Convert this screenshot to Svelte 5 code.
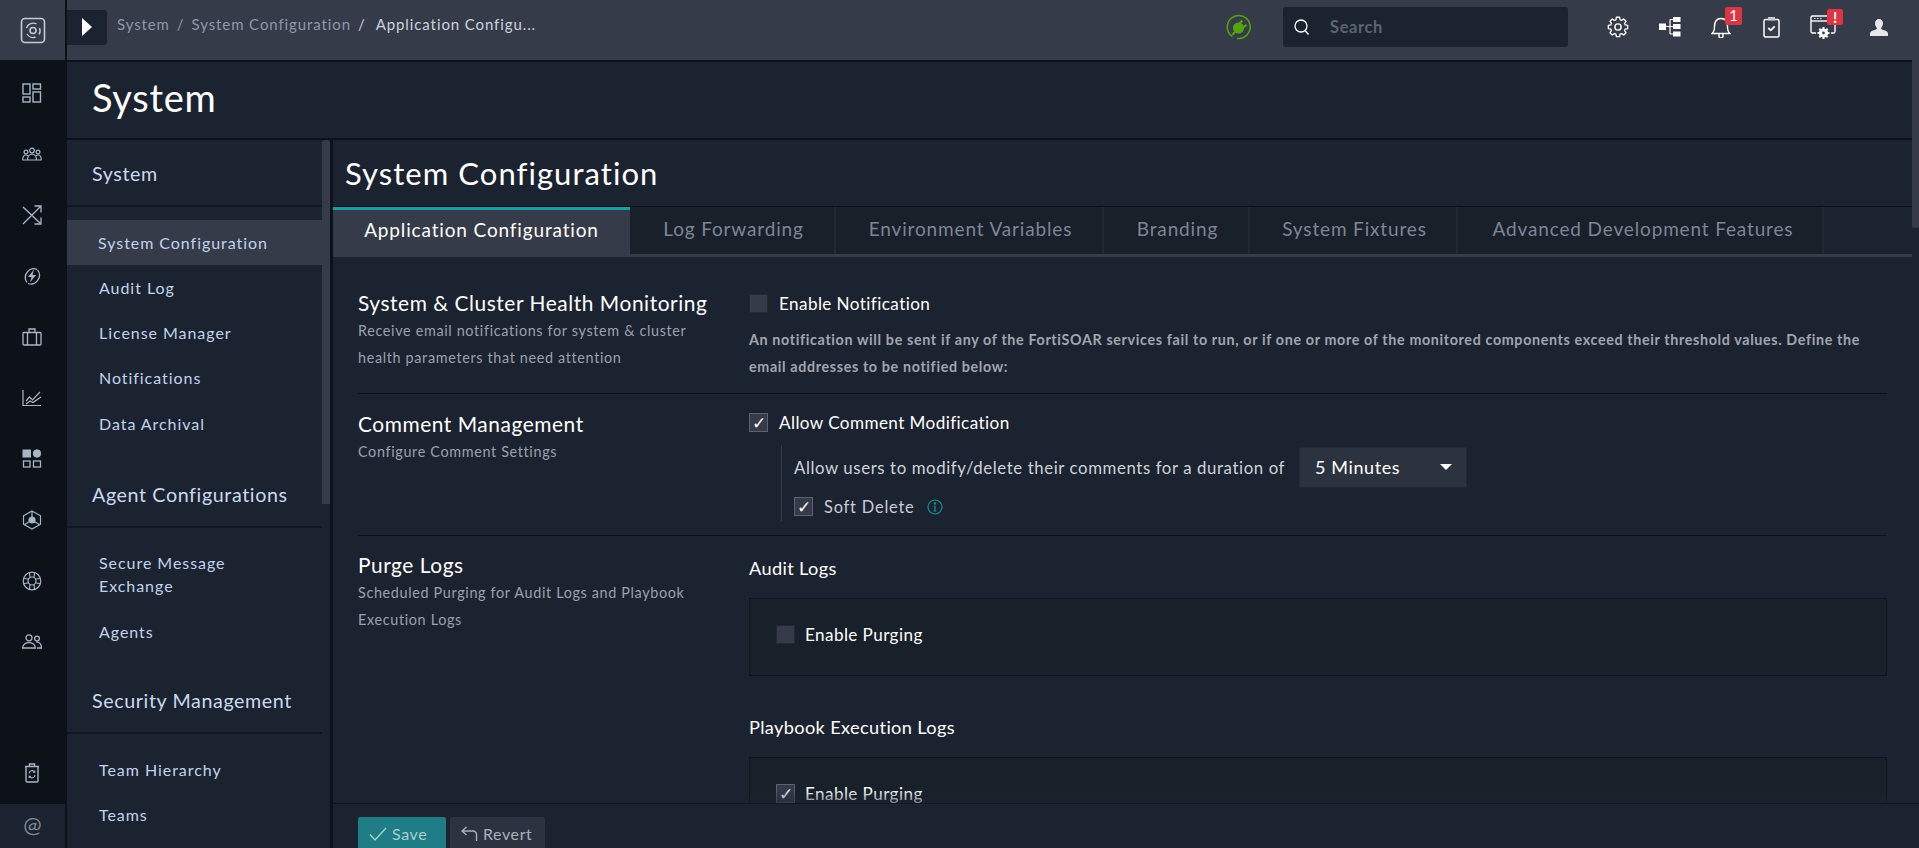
<script lang="ts">
	const groups = [
		{ title: 'System', items: ['System Configuration', 'Audit Log', 'License Manager', 'Notifications', 'Data Archival'] },
		{ title: 'Agent Configurations', items: ['Secure Message Exchange', 'Agents'] },
		{ title: 'Security Management', items: ['Team Hierarchy', 'Teams'] }
	];
	const tabs = [
		{ name: 'Application Configuration', width: 297 },
		{ name: 'Log Forwarding', width: 206 },
		{ name: 'Environment Variables', width: 268 },
		{ name: 'Branding', width: 146 },
		{ name: 'System Fixtures', width: 208 },
		{ name: 'Advanced Development Features', width: 366 }
	];
	let activeItem = $state('System Configuration');
	let activeTab = $state('Application Configuration');
</script>

<div class="app">
	<aside class="rail">
		<div class="railLogo">
			<svg width="26" height="27" viewBox="0 0 26 27" fill="none" stroke="#c5cbd3">
				<rect x="1.5" y="1.5" width="23" height="24" rx="3.5" stroke-width="1.6" />
				<circle cx="13" cy="13.5" r="3" stroke-width="1.6" />
				<path d="M6.5 11a7 7 0 0 1 10-4M19.5 11a7 7 0 0 1-.5 6.5M15.5 20a7 7 0 0 1-8.500-3" stroke-width="1.4" />
			</svg>
		</div>
		<nav class="railNav">
			<span class="railIcon"><svg width="20" height="20" viewBox="0 0 20 20" fill="none" stroke="#a9b5c5" stroke-width="1.4"><rect x="1" y="1" width="7" height="10" /><rect x="1" y="14" width="7" height="5" /><rect x="11" y="1" width="7.500" height="5" /><rect x="11" y="9" width="7.500" height="10" /></svg></span>
			<span class="railIcon"><svg width="20" height="14" viewBox="0 0 20 14" fill="none" stroke="#a9b5c5" stroke-width="1.2"><circle cx="10" cy="3.500" r="2.300" /><circle cx="4" cy="5" r="1.900" /><circle cx="16" cy="5" r="1.900" /><path d="M.700 13c0-3 1.500-5 3.300-5 1 0 1.700.4 2.300 1M19.300 13c0-3-1.500-5-3.300-5-1 0-1.700.4-2.300 1M5.500 13c0-3.500 2-5.800 4.500-5.800s4.500 2.300 4.500 5.800M.5 13h19" /></svg></span>
			<span class="railIcon"><svg width="20" height="20" viewBox="0 0 20 20" fill="none" stroke="#a9b5c5" stroke-width="1.300"><path d="M1 2l17 16M1 19L19 1M12.500 1H19v6.500M19 12.500V19h-6.500" /></svg></span>
			<span class="railIcon"><svg width="20" height="20" viewBox="0 0 20 20" fill="none" stroke="#a9b5c5" stroke-width="1.300"><path d="M5 16.500A8.700 8.700 0 0 1 15 3.300M15.500 3.800A8.700 8.700 0 0 1 6 17.500" /><path d="M12 3.500L6 11h3.500L8 16.500 14 9h-3.500z" fill="#a9b5c5" stroke="none" /></svg></span>
			<span class="railIcon"><svg width="20" height="18" viewBox="0 0 20 18" fill="none" stroke="#a9b5c5" stroke-width="1.300"><rect x="1" y="4.500" width="18" height="12.500" rx="1" /><path d="M7 4.500V1h6v3.500M5.500 4.500V17M14.500 4.500V17" /></svg></span>
			<span class="railIcon"><svg width="20" height="18" viewBox="0 0 20 18" fill="none" stroke="#a9b5c5" stroke-width="1.200"><path d="M1 1v15.500h18M4 12l3.500-4 3 3L18 3M4 15l4-3 3 1.500 8-5.500" /></svg></span>
			<span class="railIcon"><svg width="20" height="19" viewBox="0 0 20 19" fill="#a9b5c5" stroke="#a9b5c5"><rect x="1" y="1" width="7.500" height="7" /><circle cx="15" cy="4.500" r="3.700" /><rect x="1.500" y="12" width="6.500" height="6" fill="none" stroke-width="1.300" /><rect x="11.500" y="12" width="7" height="6" fill="none" stroke-width="1.300" /></svg></span>
			<span class="railIcon"><svg width="20" height="20" viewBox="0 0 20 20" fill="none" stroke="#a9b5c5" stroke-width="1.200"><path d="M10 1l8.500 4.800v8.400L10 19l-8.500-4.800V5.800z" /><circle cx="10" cy="10" r="3" fill="#a9b5c5" /><path d="M10 1v6M2 15l5.500-3.500M18 15l-5.500-3.500" /></svg></span>
			<span class="railIcon"><svg width="20" height="20" viewBox="0 0 20 20" fill="none" stroke="#a9b5c5" stroke-width="1.200"><circle cx="10" cy="10" r="8.800" /><circle cx="10" cy="10" r="4" /><path d="M7.500 1.800L8 6.300M12.500 1.800L12 6.300M7.500 18.200L8 13.700M12.500 18.200L12 13.700M1.800 7.500L6.300 8M1.800 12.500L6.300 12M18.200 7.500L13.700 8M18.200 12.500L13.700 12" /></svg></span>
			<span class="railIcon"><svg width="20" height="15" viewBox="0 0 20 15" fill="none" stroke="#a9b5c5" stroke-width="1.300"><circle cx="7" cy="3.800" r="3" /><circle cx="15" cy="4.500" r="2.400" /><path d="M.7 14c0-3.500 2.800-5.300 6.300-5.300s6.300 1.800 6.300 5.300zM14 8.200c3.200-.3 5.500 1.500 5.500 5.800H15" /></svg></span>
		</nav>
		<div class="railBottom">
			<span class="railIcon trash"><svg width="16" height="20" viewBox="0 0 16 20" fill="none" stroke="#a9b5c5" stroke-width="1.400"><path d="M1 3.500h14M5.500 3.500V1h5v2.500M2 3.500V18a1 1 0 0 0 1 1h10a1 1 0 0 0 1-1V3.500" /><path d="M5 10.500a3 3 0 0 1 5.500-1.500M11 12a3 3 0 0 1-5.500 1.500M10.800 7.500V9.300H9M5.200 15v-1.800H7" stroke-width="1.100" /></svg></span>
			<div class="railAt">@</div>
		</div>
	</aside>

	<div class="main">
		<header class="topbar">
			<button class="drawerToggle" aria-label="Toggle">
				<svg width="10" height="18" viewBox="0 0 10 18"><path d="M0 0l10 9-10 9z" fill="#fff" /></svg>
			</button>
			<div class="crumbs">
				<span>System</span><i>/</i><span>System Configuration</span><i class="last">/</i><b>Application Configu...</b>
			</div>
			<span class="plug">
				<svg width="26" height="26" viewBox="0 0 26 26" fill="none">
					<path d="M6.500 22.700A11.500 11.500 0 1 1 11 24.400" stroke="#54a40a" stroke-width="1.500" />
					<circle cx="12.500" cy="14" r="5.600" fill="#54a40a" />
					<path d="M13.500 9.500l2.800-3M17.500 13.500l3-2.800M9 18l-2.600 2.600" stroke="#54a40a" stroke-width="2.200" />
				</svg>
			</span>
			<div class="search">
				<svg width="16" height="17" viewBox="0 0 16 17" fill="none" stroke="#fff" stroke-width="1.300"><circle cx="7" cy="7" r="6" /><path d="M11 11.500l3.500 4" /></svg>
				<span>Search</span>
			</div>
			<div class="tools">
				<span class="tool"><svg width="22" height="22" viewBox="0 0 24 24" fill="none" stroke="#fff" stroke-width="1.600" stroke-linejoin="round"><circle cx="12" cy="12" r="3.400" /><path d="M10 1.500h4l.6 3.100 1.900.8 2.600-1.800 2.800 2.900-1.800 2.600.8 1.900 3.100.6v4l-3.100.6-.8 1.900 1.800 2.600-2.800 2.800-2.600-1.800-1.900.8-.6 3.100h-4l-.6-3.100-1.900-.8-2.600 1.800-2.800-2.800 1.800-2.600-.8-1.900-3.100-.6v-4l3.100-.6.800-1.900-1.800-2.600 2.800-2.800 2.600 1.800 1.900-.8z" transform="translate(12 12) scale(.88) translate(-12 -13.600)" /></svg></span>
				<span class="tool"><svg width="22" height="20" viewBox="0 0 22 20" fill="#fff"><rect x="0" y="6.500" width="7" height="6.500" /><rect x="14" y="0" width="7.500" height="5" /><rect x="14" y="7" width="7.500" height="5" /><rect x="14" y="14.500" width="7.500" height="5" /><path d="M7 9.500h4M11 2.500v14.500M11 2.500h3M11 9.500h3M11 17h3" stroke="#fff" stroke-width="1.200" fill="none" /></svg></span>
				<span class="tool">
					<svg width="20" height="21" viewBox="0 0 20 21" fill="none" stroke="#fff" stroke-width="1.400"><path d="M1 16.500c2-1.500 2.500-3 2.500-7C3.500 4.500 6 1.500 10 1.500s6.500 3 6.500 8c0 4 .5 5.500 2.500 7zM8 16.500v2.500a2 2 0 0 0 4 0v-2.500" /></svg>
					<em class="badge one">1</em>
				</span>
				<span class="tool"><svg width="17" height="21" viewBox="0 0 17 21" fill="none" stroke="#fff" stroke-width="1.500"><rect x="1" y="2.500" width="15" height="17.500" rx="1.500" /><rect x="5" y="0" width="7" height="3.500" fill="#c8ccd2" stroke="none" /><path d="M5.300 11l2.400 2.300 4-4" stroke-width="1.800" /></svg></span>
				<span class="tool">
					<svg width="28" height="26" viewBox="0 0 28 26" fill="none" stroke="#fff" stroke-width="1.400"><path d="M6 19H2.500A1.500 1.500 0 0 1 1 17.500v-14A1.500 1.500 0 0 1 2.500 2h21A1.500 1.500 0 0 1 25 3.500v14a1.500 1.500 0 0 1-1.500 1.500H21" /><path d="M1 7h24" stroke-width="1.400" /><path d="M4 4.500h1.500M7 4.500h1.500M10 4.500h1.500" stroke-width="1" /><circle cx="13.500" cy="19" r="3" stroke-width="3.200" /><path d="M13.500 13v2M13.500 23v2M7.500 19h2M17.500 19h2M9.300 14.800l1.400 1.400M16.300 21.800l1.400 1.400M9.300 23.200l1.400-1.400M16.300 16.200l1.400-1.400" stroke-width="2" /></svg>
					<em class="badge bang">!</em>
				</span>
				<span class="tool"><svg width="18" height="17" viewBox="0 0 18 17" fill="#e6e7e9"><path d="M9 0c2.500 0 4 2 4 4.300 0 2-1 3.500-1.800 4.700-.4.800.2 1.500 2 2 2.500.7 4.800 1.800 4.800 3.500V17H0v-2.500c0-1.700 2.300-2.800 4.800-3.500 1.800-.5 2.400-1.200 2-2C6 7.800 5 6.300 5 4.300 5 2 6.500 0 9 0z" /></svg></span>
			</div>
		</header>

		<div class="pageHead"><h1>System</h1></div>

		<div class="panes">
			<aside class="sidebar">
				{#each groups as group}
					<h3>{group.title}</h3>
					<ul>
						{#each group.items as item}
							<li class:active={item === activeItem}>
								<button onclick={() => (activeItem = item)}>{item}</button>
							</li>
						{/each}
					</ul>
				{/each}
			</aside>
			<div class="sideScroll"><span></span></div>

			<section class="content">
				<h2>System Configuration</h2>
				<div class="tabs">
					{#each tabs as tab}
						<button class="tab" class:active={tab.name === activeTab} style="width: {tab.width}px" onclick={() => (activeTab = tab.name)}>{tab.name}</button>
					{/each}
				</div>

				<div class="form">
					<div class="row first">
						<div class="rowLabel">
							<h4>System &amp; Cluster Health Monitoring</h4>
							<p>Receive email notifications for system &amp; cluster<br />health parameters that need attention</p>
						</div>
						<div class="rowBody">
							<label class="check"><span class="box"></span><b>Enable Notification</b></label>
							<p class="hint">An notification will be sent if any of the FortiSOAR services fail to run, or if one or more of the monitored components exceed their threshold values. Define the email addresses to be notified below:</p>
						</div>
					</div>

					<div class="row second">
						<div class="rowLabel">
							<h4>Comment Management</h4>
							<p>Configure Comment Settings</p>
						</div>
						<div class="rowBody">
							<label class="check"><span class="box on">✓</span><b>Allow Comment Modification</b></label>
							<div class="nested">
								<div class="duration">
									<span>Allow users to modify/delete their comments for a duration of</span>
									<div class="select"><span>5 Minutes</span><i></i></div>
								</div>
								<label class="check soft">
									<span class="box on">✓</span><span class="softLabel">Soft Delete</span>
									<svg class="info" width="16" height="16" viewBox="0 0 16 16" fill="none" stroke="#16918f" stroke-width="1.200"><circle cx="8" cy="8" r="7" /><path d="M8 7v5M6.500 12h3M6.800 7H8" /><circle cx="8" cy="4.500" r=".6" /></svg>
								</label>
							</div>
						</div>
					</div>

					<div class="row third">
						<div class="rowLabel">
							<h4>Purge Logs</h4>
							<p>Scheduled Purging for Audit Logs and Playbook<br />Execution Logs</p>
						</div>
						<div class="rowBody">
							<h5>Audit Logs</h5>
							<div class="purgeBox">
								<label class="check"><span class="box"></span><b>Enable Purging</b></label>
							</div>
							<h5 class="second">Playbook Execution Logs</h5>
							<div class="purgeBox">
								<label class="check"><span class="box on">✓</span><b>Enable Purging</b></label>
							</div>
						</div>
					</div>
					<div class="fade"></div>
				</div>

				<footer class="saveBar">
					<button class="save">
						<svg width="18" height="14" viewBox="0 0 18 14" fill="none" stroke="#a9cfd2" stroke-width="1.300"><path d="M1 7.500L6 13 17 1" /></svg>
						Save
					</button>
					<button class="revert">
						<svg width="17" height="15" viewBox="0 0 17 15" fill="none" stroke="#aab1bd" stroke-width="1.400"><path d="M5.500 1L1 5l4.500 4M1 5h11a3.500 3.500 0 0 1 3.500 3.500V15" /></svg>
						Revert
					</button>
				</footer>
			</section>
		</div>
	</div>
	<div class="pageScroll"></div>
</div>

<style>
	:global(body) {
		margin: 0;
		background: #1c2330;
		overflow: hidden;
	}

	button {
		background: none;
		border: none;
		color: inherit;
		cursor: pointer;
		font: inherit;
		letter-spacing: inherit;
		padding: 0;
	}

	.app {
		color: #fff;
		display: flex;
		font-family: Lato, "Liberation Sans", sans-serif;
		height: 100vh;
		letter-spacing: 0.6px;
		overflow: hidden;
		position: relative;
	}

	.rail {
		background: #0d1219;
		display: flex;
		flex: 0 0 67px;
		flex-direction: column;
	}

	.railLogo {
		align-items: center;
		background: #353b48;
		border-bottom: 2px solid #0d1219;
		border-right: 2px solid #0d1219;
		box-sizing: border-box;
		display: flex;
		flex: 0 0 62px;
		justify-content: center;
	}

	.railNav {
		display: flex;
		flex-direction: column;
	}

	.railIcon {
		align-items: center;
		display: flex;
		height: 61px;
		justify-content: center;
		width: 64px;
	}

	.railBottom {
		display: flex;
		flex-direction: column;
		margin-top: auto;
	}

	.railIcon.trash {
		height: 40px;
		margin-bottom: 11px;
	}

	.railAt {
		background: #1c2330;
		color: #7f8895;
		font-size: 22px;
		height: 44px;
		letter-spacing: 0;
		line-height: 42px;
		text-align: center;
		width: 65px;
	}

	.main {
		display: flex;
		flex: 1 1 auto;
		flex-direction: column;
		min-width: 0;
	}

	.topbar {
		align-items: center;
		background: #353b48;
		border-bottom: 2px solid #0d1219;
		display: flex;
		flex: 0 0 62px;
		box-sizing: border-box;
		padding-bottom: 9px;
		padding-top: 3px;
	}

	.drawerToggle {
		align-items: center;
		background: #1c2330;
		border-radius: 0 3px 3px 0;
		display: flex;
		height: 35px;
		justify-content: center;
		width: 40px;
	}

	.crumbs {
		color: #8c99ab;
		flex: 1 1 auto;
		font-size: 15px;
		letter-spacing: 0.9px;
		margin-left: 10px;
		margin-top: -6px;
		white-space: nowrap;
	}

	.crumbs i {
		font-style: normal;
		margin: 0 7px;
	}

	.crumbs i.last {
		color: #c4ccd8;
		margin-right: 10px;
	}

	.crumbs b {
		color: #ccd3de;
		font-weight: 400;
	}

	.plug {
		display: flex;
		margin-right: 31px;
	}

	.search {
		align-items: center;
		background: #1c2330;
		border-radius: 3px;
		box-sizing: border-box;
		color: #5b6371;
		display: flex;
		font-size: 16.5px;
		font-weight: 700;
		gap: 20px;
		height: 40px;
		margin-right: 24px;
		padding-left: 11px;
		width: 285px;
	}

	.tools {
		display: flex;
		margin-right: 13px;
	}

	.tool {
		align-items: center;
		display: flex;
		height: 40px;
		justify-content: center;
		position: relative;
		width: 52px;
	}

	.tool:nth-child(2),
	.tool:nth-child(3) {
		width: 51px;
	}

	.tool:nth-child(4) {
		width: 50px;
	}

	.tool:nth-child(5) {
		width: 56px;
	}

	.tool:nth-child(6) {
		width: 54px;
	}

	.badge {
		background: #dc3545;
		border-radius: 2px;
		font-size: 15px;
		font-style: normal;
		height: 18px;
		letter-spacing: 0;
		line-height: 16px;
		position: absolute;
		text-align: center;
		top: 0;
		width: 17px;
	}

	.badge.one {
		left: 30px;
	}

	.badge.bang {
		left: 31px;
		top: 2px;
		width: 16px;
		height: 16px;
		font-weight: 700;
	}

	.pageHead {
		border-bottom: 2px solid #0d1219;
		box-sizing: border-box;
		flex: 0 0 78px;
		padding-left: 25px;
	}

	h1 {
		font-size: 38px;
		font-weight: 400;
		letter-spacing: 0.7px;
		line-height: 70px;
		margin: 0;
	}

	.panes {
		display: flex;
		flex: 1 1 auto;
		min-height: 0;
	}

	.sidebar {
		flex: 0 0 255px;
		overflow: hidden;
	}

	.sidebar h3 {
		border-bottom: 2px solid #12171f;
		box-sizing: border-box;
		color: #c9d9ee;
		font-size: 19.7px;
		font-weight: 400;
		height: 67px;
		line-height: 68px;
		margin: 0 0 12.5px;
		padding-left: 25px;
	}

	.sidebar ul {
		list-style: none;
		margin: 0 0 15px;
		padding: 0;
	}

	.sidebar ul:nth-of-type(2) {
		margin-bottom: 13px;
	}

	.sidebar li {
		color: #c0d3ec;
		font-size: 16px;
		line-height: 23px;
		padding: 11px 45px 11.3px 32px;
	}

	.sidebar li button {
		display: block;
		letter-spacing: 0.95px;
		text-align: left;
	}

	.sidebar li.active {
		background: #353b48;
		padding-left: 31px;
	}

	.sideScroll {
		border-right: 3px solid #0d1219;
		flex: 0 0 8px;
	}

	.sideScroll span {
		background: #353b48;
		border-radius: 3px 3px 0 0;
		display: block;
		height: 364px;
		width: 8px;
	}

	.content {
		display: flex;
		flex: 1 1 auto;
		flex-direction: column;
		min-width: 0;
		position: relative;
	}

	h2 {
		border-bottom: 1px solid #0d1219;
		flex: 0 0 65px;
		font-size: 31px;
		font-weight: 400;
		letter-spacing: 1.05px;
		line-height: 66px;
		margin: 0;
		padding-left: 12px;
	}

	.tabs {
		border-bottom: 3px solid #353b48;
		box-sizing: border-box;
		display: flex;
		flex: 0 0 50px;
		margin-right: 7px;
	}

	.tab {
		background: #19202a;
		border-right: 2px solid #212835;
		box-sizing: border-box;
		color: #7c8696;
		font-size: 19px;
		height: 47px;
		letter-spacing: 0.85px;
		padding-bottom: 5px;
		padding-left: 3px;
	}

	.tab:last-child {
		padding-left: 6px;
	}

	.tab.active {
		background: #353b48;
		border: none;
		border-top: 3px solid #18a0a0;
		color: #fff;
		padding-bottom: 6px;
		padding-left: 0;
	}

	.form {
		flex: 1 1 auto;
		min-height: 0;
		overflow: hidden;
		padding: 0 32px 0 25px;
		position: relative;
	}

	.row {
		border-bottom: 1px solid #0d1219;
		display: flex;
	}

	.row.first {
		height: 137px;
		padding-top: 34px;
		box-sizing: border-box;
	}

	.row.first .rowBody {
		padding-top: 2px;
	}

	.row.second {
		height: 142px;
		padding-top: 18px;
		box-sizing: border-box;
	}

	.row.third {
		border: none;
		padding-top: 17px;
	}

	.row.third .rowBody {
		padding-top: 3px;
	}

	.rowLabel {
		flex: 0 0 391px;
	}

	h4 {
		font-size: 20.9px;
		font-weight: 400;
		letter-spacing: 0.55px;
		line-height: 24px;
		margin: 0;
	}

	.rowLabel p {
		color: #9aa1ab;
		font-size: 14.4px;
		letter-spacing: 0.65px;
		line-height: 27px;
		margin: 2px 0 0;
	}

	.rowBody {
		flex: 1 1 auto;
		min-width: 0;
	}

	.check {
		align-items: center;
		display: flex;
		gap: 10px;
	}

	.row.first .check,
	.row.second .check {
		gap: 11px;
	}

	.check b {
		font-size: 17.1px;
		font-weight: 400;
		letter-spacing: 0.42px;
	}

	.box {
		align-items: center;
		background: #353b48;
		border: 1px solid #232935;
		box-sizing: border-box;
		color: #fff;
		display: flex;
		flex: 0 0 19px;
		font-size: 17px;
		height: 19px;
		justify-content: center;
		letter-spacing: 0;
		line-height: 1;
	}

	.box.on {
		border-color: #5b6270;
	}

	.hint {
		color: #a0a6af;
		font-size: 14.3px;
		font-weight: 700;
		letter-spacing: 0.64px;
		line-height: 27px;
		margin: 12px 0 0;
	}

	.nested {
		border-left: 1px solid #353b48;
		display: flex;
		flex-direction: column;
		gap: 9px;
		margin: 13px 0 0 32px;
		padding: 1px 0 5px 12px;
	}

	.duration {
		align-items: center;
		color: #ced2d8;
		display: flex;
		font-size: 16.8px;
		gap: 14px;
	}

	.select {
		align-items: center;
		background: #2b3240;
		border: 1px solid #232935;
		box-sizing: border-box;
		color: #fff;
		display: flex;
		font-size: 18px;
		height: 41px;
		justify-content: space-between;
		padding: 0 14px 2px 15px;
		width: 168px;
	}

	.select i {
		border-left: 6px solid transparent;
		border-right: 6px solid transparent;
		border-top: 6px solid #fff;
	}

	.softLabel {
		color: #c8ccd3;
		font-size: 16.4px;
		letter-spacing: 0.8px;
	}

	.info {
		margin-left: 1px;
	}

	h5 {
		font-size: 18.2px;
		font-weight: 400;
		letter-spacing: 0.35px;
		line-height: 24px;
		margin: 0 0 18px;
	}

	h5.second {
		margin: 39px 0 18px;
	}

	.purgeBox {
		background: #18212a;
		border: 1px solid #0f151c;
		box-sizing: border-box;
		height: 78px;
		padding: 25px 26px;
	}

	.fade {
		background: linear-gradient(to bottom, rgba(28, 35, 48, 0), rgba(28, 35, 48, 0.55));
		bottom: 0;
		height: 14px;
		left: 0;
		position: absolute;
		right: 0;
	}

	.saveBar {
		background: #1c2330;
		border-top: 1px solid #0f151c;
		box-sizing: border-box;
		display: flex;
		flex: 0 0 45px;
		gap: 4px;
		padding: 13px 0 0 25px;
	}

	.saveBar button {
		align-items: center;
		border-radius: 2px 2px 0 0;
		display: flex;
		font-size: 16px;
		gap: 5px;
		height: 31px;
		padding: 2px 0 0 11px;
	}

	.save {
		background: #217d85;
		color: #a9cfd2;
		width: 88px;
	}

	.revert {
		background: #2b3240;
		color: #aab1bd;
		width: 95px;
	}

	.pageScroll {
		background: #353b48;
		border-radius: 0 0 3px 3px;
		height: 228px;
		position: absolute;
		right: 0;
		top: 0;
		width: 7px;
	}
</style>
